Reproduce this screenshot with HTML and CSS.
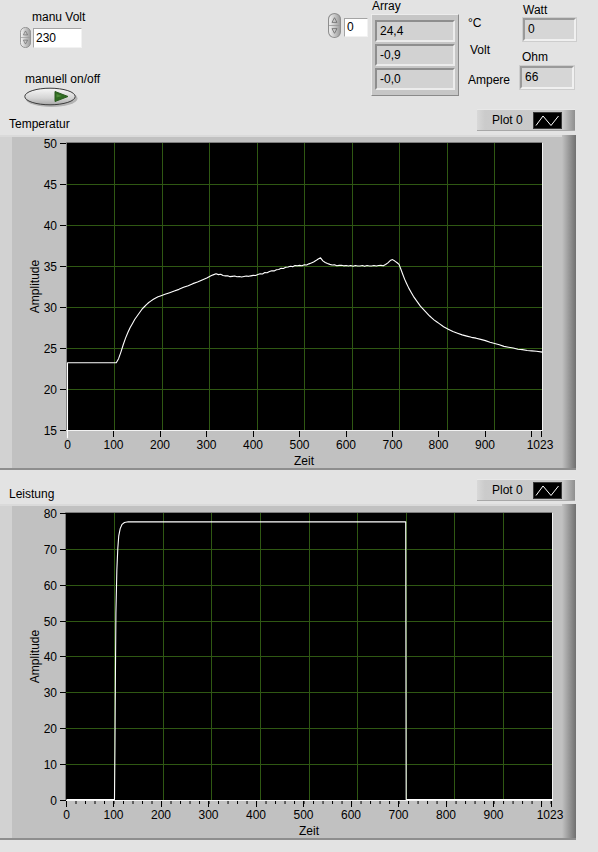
FILE: index.html
```html
<!DOCTYPE html>
<html>
<head>
<meta charset="utf-8">
<title>Front Panel</title>
<link rel="stylesheet" href="styles.css">
</head>
<body>
<div class="panel">
  <div class="controls">
    <div class="col-volt">
      <div class="lbl lbl-manu">manu Volt</div>
      <div class="numrow">
        <svg class="spin spin-s" viewBox="0 0 12 24" preserveAspectRatio="none">
          <defs><linearGradient id="sg1" x1="0" x2="1"><stop offset="0" stop-color="#f6f6f6"/><stop offset="1" stop-color="#9a9a9a"/></linearGradient></defs>
          <rect x="0.5" y="0.5" width="11" height="23" rx="5.5" fill="url(#sg1)" stroke="#8e8e8e"/>
          <line x1="1" y1="12" x2="11" y2="12" stroke="#9a9a9a" stroke-width="0.8"/>
          <path d="M6 4.5 L8.3 9 L3.7 9 Z" fill="none" stroke="#6e6e6e" stroke-width="0.8"/>
          <path d="M6 19.5 L8.3 15 L3.7 15 Z" fill="none" stroke="#6e6e6e" stroke-width="0.8"/>
        </svg>
        <div class="numbox">230</div>
      </div>
      <div class="lbl lbl-onoff">manuell on/off</div>
      <svg class="toggle" width="54" height="21" viewBox="0 0 54 21">
        <defs><linearGradient id="tg" x1="0" y1="0" x2="0" y2="1"><stop offset="0" stop-color="#f7f7f7"/><stop offset="0.6" stop-color="#d4d4d4"/><stop offset="1" stop-color="#a9a9a9"/></linearGradient></defs>
        <ellipse cx="27.5" cy="11.5" rx="26" ry="8.5" fill="#8c8c8c" opacity="0.55"/>
        <ellipse cx="26" cy="9.5" rx="25.2" ry="8.3" fill="url(#tg)" stroke="#3c3c3c" stroke-width="1"/>
        <path d="M31 4.5 L44 9.5 L31 14.5 Z" fill="#2f6a22" stroke="#2a5a1e" stroke-width="1" stroke-linejoin="round"/>
        <path d="M32.5 7 L38 9 L32.5 10.5 Z" fill="#4f8a3a"/>
      </svg>
    </div>

    <div class="col-index">
      <svg class="spin spin-l" viewBox="0 0 12 24" preserveAspectRatio="none">
        <defs><linearGradient id="sg2" x1="0" x2="1"><stop offset="0" stop-color="#f6f6f6"/><stop offset="1" stop-color="#9a9a9a"/></linearGradient></defs>
        <rect x="0.5" y="0.5" width="11" height="23" rx="5.5" fill="url(#sg2)" stroke="#8e8e8e"/>
        <line x1="1" y1="12" x2="11" y2="12" stroke="#9a9a9a" stroke-width="0.8"/>
        <path d="M6 4.5 L8.3 9 L3.7 9 Z" fill="none" stroke="#6e6e6e" stroke-width="0.8"/>
        <path d="M6 19.5 L8.3 15 L3.7 15 Z" fill="none" stroke="#6e6e6e" stroke-width="0.8"/>
      </svg>
      <div class="idxbox">0</div>
    </div>

    <div class="col-array">
      <div class="lbl lbl-array">Array</div>
      <div class="array-frame">
        <div class="cell">24,4</div>
        <div class="cell">-0,9</div>
        <div class="cell">-0,0</div>
      </div>
    </div>

    <div class="col-units">
      <div class="lbl u-c">°C</div>
      <div class="lbl u-volt">Volt</div>
      <div class="lbl u-amp">Ampere</div>
    </div>

    <div class="col-watt">
      <div class="lbl lbl-watt">Watt</div>
      <div class="ind ind-watt">0</div>
      <div class="lbl lbl-ohm">Ohm</div>
      <div class="ind ind-ohm">66</div>
    </div>
  </div>

  <div class="ghead ghead1">
    <div class="lbl glabel">Temperatur</div>
    <div class="legend">
      <span class="lg-text">Plot 0</span>
      <svg class="swatch" width="29" height="17" viewBox="0 0 29 17">
        <rect x="0.5" y="0.5" width="28" height="16" fill="#000" stroke="#3a3a3a"/>
        <polyline points="3,13.5 10,4 18,13.5 25.5,4" fill="none" stroke="#fff" stroke-width="1"/>
      </svg>
    </div>
  </div>

  <div class="graph">
    <svg class="chart" width="598" height="336" viewBox="0 135 598 336">
      <defs><linearGradient id="fr1" x1="0" x2="1"><stop offset="0" stop-color="#c1c1c1"/><stop offset="1" stop-color="#707070"/></linearGradient></defs>
      <rect x="0" y="135" width="576" height="335" fill="#c1c1c1"/>
      <rect x="0" y="135" width="12" height="335" fill="#d2d2d2"/>
      <rect x="0" y="135" width="576" height="2" fill="#dadada"/>
      <rect x="562" y="135" width="14" height="335" fill="url(#fr1)"/>
      <rect x="0" y="468" width="576" height="2" fill="#8e8e8e"/>
      <rect x="67" y="143" width="475" height="287" fill="#000"/>
      <g class="grid">
        <line x1="114.5" y1="143" x2="114.5" y2="430"/>
        <line x1="162.5" y1="143" x2="162.5" y2="430"/>
        <line x1="209.5" y1="143" x2="209.5" y2="430"/>
        <line x1="257.5" y1="143" x2="257.5" y2="430"/>
        <line x1="304.5" y1="143" x2="304.5" y2="430"/>
        <line x1="352.5" y1="143" x2="352.5" y2="430"/>
        <line x1="399.5" y1="143" x2="399.5" y2="430"/>
        <line x1="447.5" y1="143" x2="447.5" y2="430"/>
        <line x1="494.5" y1="143" x2="494.5" y2="430"/>
        <line x1="67" y1="184.5" x2="542" y2="184.5"/>
        <line x1="67" y1="225.5" x2="542" y2="225.5"/>
        <line x1="67" y1="266.5" x2="542" y2="266.5"/>
        <line x1="67" y1="307.5" x2="542" y2="307.5"/>
        <line x1="67" y1="348.5" x2="542" y2="348.5"/>
        <line x1="67" y1="389.5" x2="542" y2="389.5"/>
      </g>
      <path d="M66.5 430 V142.5 H542" stroke="#7e7e7e" fill="none"/>
      <path d="M66.5 430.5 H542.5 V143" stroke="#f2f2f2" fill="none"/>
      <g stroke="#000" stroke-width="1">
        <line x1="60" y1="143.5" x2="66" y2="143.5"/>
        <line x1="60" y1="184.5" x2="66" y2="184.5"/>
        <line x1="60" y1="225.5" x2="66" y2="225.5"/>
        <line x1="60" y1="266.5" x2="66" y2="266.5"/>
        <line x1="60" y1="307.5" x2="66" y2="307.5"/>
        <line x1="60" y1="348.5" x2="66" y2="348.5"/>
        <line x1="60" y1="389.5" x2="66" y2="389.5"/>
        <line x1="60" y1="430.5" x2="66" y2="430.5"/>
        <line x1="67.5" y1="431" x2="67.5" y2="437"/>
        <line x1="113.5" y1="431" x2="113.5" y2="437"/>
        <line x1="160.5" y1="431" x2="160.5" y2="437"/>
        <line x1="206.5" y1="431" x2="206.5" y2="437"/>
        <line x1="253.5" y1="431" x2="253.5" y2="437"/>
        <line x1="299.5" y1="431" x2="299.5" y2="437"/>
        <line x1="346.5" y1="431" x2="346.5" y2="437"/>
        <line x1="392.5" y1="431" x2="392.5" y2="437"/>
        <line x1="438.5" y1="431" x2="438.5" y2="437"/>
        <line x1="485.5" y1="431" x2="485.5" y2="437"/>
        <line x1="531.5" y1="431" x2="531.5" y2="437"/>
        <line x1="541.5" y1="431" x2="541.5" y2="437"/>
      </g>
      <g text-anchor="end">
        <text x="57" y="148">50</text>
        <text x="57" y="189">45</text>
        <text x="57" y="230">40</text>
        <text x="57" y="271">35</text>
        <text x="57" y="312">30</text>
        <text x="57" y="353">25</text>
        <text x="57" y="394">20</text>
        <text x="57" y="435">15</text>
      </g>
      <g text-anchor="middle">
        <text x="67.5" y="449">0</text>
        <text x="113.5" y="449">100</text>
        <text x="160" y="449">200</text>
        <text x="206.5" y="449">300</text>
        <text x="253" y="449">400</text>
        <text x="299.5" y="449">500</text>
        <text x="346" y="449">600</text>
        <text x="392.5" y="449">700</text>
        <text x="438.5" y="449">800</text>
        <text x="485" y="449">900</text>
        <text x="540" y="449">1023</text>
        <text x="304" y="465">Zeit</text>
        <text transform="translate(39,286.5) rotate(-90)">Amplitude</text>
      </g>
      <polyline class="curve" transform="translate(67.5,430) scale(0.46432,-8.2)" vector-effect="non-scaling-stroke" fill="none" stroke="#fff" stroke-width="1.1" stroke-linejoin="round"
        points="0,-1 0,8.2 105,8.2 110,8.7 115,9.5 120,10.4 125,11.2 130,11.9 135,12.5 140,13.0 145,13.5 150,13.9 155,14.3 160,14.7 165,15.0 170,15.3 175,15.55 180,15.75 185,15.95 190,16.1 195,16.25 200,16.35 210,16.55 220,16.75 230,16.95 240,17.15 250,17.4 260,17.6 270,17.85 280,18.05 290,18.3 300,18.55 305,18.7 310,18.85 315,18.95 320,19.05 325,18.95 330,19.0 335,18.85 340,18.8 345,18.82 350,18.7 355,18.74 360,18.78 365,18.68 370,18.72 375,18.66 380,18.72 385,18.78 390,18.74 395,18.8 400,18.86 405,18.84 410,18.96 415,19.05 420,19.02 425,19.2 430,19.18 435,19.32 440,19.42 445,19.4 450,19.55 455,19.58 460,19.72 465,19.7 470,19.84 475,19.88 480,19.96 485,19.92 490,20.06 495,20.02 500,20.08 505,20.04 510,20.16 515,20.12 520,20.26 525,20.36 530,20.48 535,20.66 540,20.86 545,21.0 550,20.62 555,20.42 560,20.3 565,20.2 570,20.12 575,20.16 580,20.04 585,20.08 590,20.1 595,20.02 600,20.06 605,20.0 610,20.06 615,19.96 620,20.06 625,20.0 630,20.0 635,20.06 640,19.96 645,20.06 650,20.0 655,20.0 660,20.06 665,20.0 670,20.06 675,20.08 680,20.02 685,20.18 690,20.38 695,20.66 700,20.78 705,20.6 710,20.4 714,20.2 718,19.6 722,19.0 726,18.4 730,17.9 735,17.3 740,16.8 745,16.3 750,15.9 755,15.5 760,15.1 765,14.8 770,14.5 775,14.2 780,13.9 785,13.65 790,13.4 795,13.2 800,13.0 810,12.6 820,12.3 830,12.0 840,11.8 850,11.6 860,11.45 870,11.3 880,11.2 890,11.05 900,10.9 910,10.7 920,10.55 930,10.4 940,10.2 950,10.1 960,10.0 970,9.85 980,9.8 990,9.7 1000,9.65 1010,9.6 1023,9.5"/>
    </svg>
  </div>

  <div class="ghead ghead2">
    <div class="lbl glabel">Leistung</div>
    <div class="legend">
      <span class="lg-text">Plot 0</span>
      <svg class="swatch" width="29" height="17" viewBox="0 0 29 17">
        <rect x="0.5" y="0.5" width="28" height="16" fill="#000" stroke="#3a3a3a"/>
        <polyline points="3,13.5 10,4 18,13.5 25.5,4" fill="none" stroke="#fff" stroke-width="1"/>
      </svg>
    </div>
  </div>

  <div class="graph">
    <svg class="chart" width="598" height="336" viewBox="0 504 598 336">
      <defs><linearGradient id="fr2" x1="0" x2="1"><stop offset="0" stop-color="#c1c1c1"/><stop offset="1" stop-color="#707070"/></linearGradient></defs>
      <rect x="0" y="504" width="576" height="336" fill="#c1c1c1"/>
      <rect x="0" y="504" width="12" height="336" fill="#d2d2d2"/>
      <rect x="0" y="504" width="576" height="2" fill="#dadada"/>
      <rect x="562" y="504" width="14" height="336" fill="url(#fr2)"/>
      <rect x="0" y="838" width="576" height="2" fill="#8e8e8e"/>
      <rect x="66" y="513" width="486" height="287" fill="#000"/>
      <g class="grid">
        <line x1="114.5" y1="513" x2="114.5" y2="800"/>
        <line x1="163.5" y1="513" x2="163.5" y2="800"/>
        <line x1="211.5" y1="513" x2="211.5" y2="800"/>
        <line x1="260.5" y1="513" x2="260.5" y2="800"/>
        <line x1="309.5" y1="513" x2="309.5" y2="800"/>
        <line x1="357.5" y1="513" x2="357.5" y2="800"/>
        <line x1="406.5" y1="513" x2="406.5" y2="800"/>
        <line x1="454.5" y1="513" x2="454.5" y2="800"/>
        <line x1="503.5" y1="513" x2="503.5" y2="800"/>
        <line x1="66" y1="549.5" x2="552" y2="549.5"/>
        <line x1="66" y1="585.5" x2="552" y2="585.5"/>
        <line x1="66" y1="621.5" x2="552" y2="621.5"/>
        <line x1="66" y1="656.5" x2="552" y2="656.5"/>
        <line x1="66" y1="692.5" x2="552" y2="692.5"/>
        <line x1="66" y1="728.5" x2="552" y2="728.5"/>
        <line x1="66" y1="764.5" x2="552" y2="764.5"/>
      </g>
      <path d="M65.5 800 V512.5 H552" stroke="#7e7e7e" fill="none"/>
      <path d="M65.5 800.5 H552.5 V513" stroke="#f2f2f2" fill="none"/>
      <g stroke="#000" stroke-width="1">
        <line x1="60" y1="513.5" x2="66" y2="513.5"/>
        <line x1="60" y1="549.5" x2="66" y2="549.5"/>
        <line x1="60" y1="585.5" x2="66" y2="585.5"/>
        <line x1="60" y1="621.5" x2="66" y2="621.5"/>
        <line x1="60" y1="656.5" x2="66" y2="656.5"/>
        <line x1="60" y1="692.5" x2="66" y2="692.5"/>
        <line x1="60" y1="728.5" x2="66" y2="728.5"/>
        <line x1="60" y1="764.5" x2="66" y2="764.5"/>
        <line x1="60" y1="800.5" x2="66" y2="800.5"/>
        <line x1="66.5" y1="801" x2="66.5" y2="807"/>
        <line x1="113.5" y1="801" x2="113.5" y2="807"/>
        <line x1="161.5" y1="801" x2="161.5" y2="807"/>
        <line x1="208.5" y1="801" x2="208.5" y2="807"/>
        <line x1="256.5" y1="801" x2="256.5" y2="807"/>
        <line x1="303.5" y1="801" x2="303.5" y2="807"/>
        <line x1="351.5" y1="801" x2="351.5" y2="807"/>
        <line x1="398.5" y1="801" x2="398.5" y2="807"/>
        <line x1="446.5" y1="801" x2="446.5" y2="807"/>
        <line x1="493.5" y1="801" x2="493.5" y2="807"/>
        <line x1="541.5" y1="801" x2="541.5" y2="807"/>
        <line x1="551.5" y1="801" x2="551.5" y2="807"/>
      </g>
      <line x1="66" y1="802.5" x2="553" y2="802.5" stroke="#000" stroke-width="3" stroke-dasharray="1 8.5014"/>
      <g text-anchor="end">
        <text x="57" y="518">80</text>
        <text x="57" y="554">70</text>
        <text x="57" y="590">60</text>
        <text x="57" y="626">50</text>
        <text x="57" y="661">40</text>
        <text x="57" y="697">30</text>
        <text x="57" y="733">20</text>
        <text x="57" y="769">10</text>
        <text x="57" y="805">0</text>
      </g>
      <g text-anchor="middle">
        <text x="66.5" y="819">0</text>
        <text x="113.5" y="819">100</text>
        <text x="161" y="819">200</text>
        <text x="208.5" y="819">300</text>
        <text x="256" y="819">400</text>
        <text x="303.5" y="819">500</text>
        <text x="351" y="819">600</text>
        <text x="398.5" y="819">700</text>
        <text x="446" y="819">800</text>
        <text x="493.5" y="819">900</text>
        <text x="550" y="819">1023</text>
        <text x="309" y="835">Zeit</text>
        <text transform="translate(39,656.5) rotate(-90)">Amplitude</text>
      </g>
      <polyline class="curve" transform="translate(66.5,799.5) scale(0.47507,-3.5875)" vector-effect="non-scaling-stroke" fill="none" stroke="#fff" stroke-width="1.1" stroke-linejoin="round"
        points="0,0 101,0 102,15 103,35 104,52 106,64 108,70 110,73.5 113,75.5 117,76.7 122,77.2 130,77.4 714,77.4 715,0 1023,0"/>
    </svg>
  </div>
</div>
</body>
</html>
```

FILE: styles.css
```css
* {
  box-sizing: border-box;
}

body {
  margin: 0;
  background: #e3e3e3;
  font-family: "Liberation Sans", Arial, sans-serif;
  font-size: 12px;
  color: #000;
}

.panel {
  width: 598px;
  height: 852px;
  overflow: hidden;
}

.lbl {
  line-height: 14px;
  white-space: nowrap;
}

/* ---------- top controls ---------- */
.controls {
  display: flex;
  align-items: flex-start;
  height: 108px;
}

.col-volt {
  margin-left: 20px;
  width: 62px;
  display: flex;
  flex-direction: column;
  align-items: flex-start;
}

.lbl-manu {
  margin: 10px 0 0 12px;
}

.numrow {
  display: flex;
  align-items: center;
  margin-top: 3px;
}

.spin {
  display: block;
  flex: none;
}

.spin-s {
  width: 11px;
  height: 21px;
}

.spin-l {
  width: 13px;
  height: 25px;
  margin-top: 13px;
}

.numbox {
  width: 49px;
  height: 20px;
  margin-left: 2px;
  background: #fff;
  border-top: 1px solid #a4a4a4;
  border-left: 1px solid #a4a4a4;
  border-right: 1px solid #f2f2f2;
  border-bottom: 1px solid #f2f2f2;
  padding-left: 2px;
  line-height: 18px;
}

.lbl-onoff {
  margin: 24px 0 0 5px;
}

.toggle {
  display: block;
  margin: 1px 0 0 4px;
}

.col-index {
  display: flex;
  align-items: flex-start;
  margin-left: 246px;
}

.idxbox {
  width: 24px;
  height: 19px;
  margin: 18px 0 0 3px;
  background: #fff;
  border-top: 1px solid #a4a4a4;
  border-left: 1px solid #a4a4a4;
  border-right: 1px solid #f2f2f2;
  border-bottom: 1px solid #f2f2f2;
  padding-left: 2px;
  line-height: 17px;
}

.col-array {
  margin-left: 3px;
}

.lbl-array {
  line-height: 13px;
  margin-left: 1px;
}

.array-frame {
  width: 88px;
  height: 82px;
  margin-top: 1px;
  padding: 5px 3px;
  background: #c6c6c6;
  border: 1px solid;
  border-color: #ececec #8a8a8a #8a8a8a #ececec;
  display: flex;
  flex-direction: column;
  gap: 2px;
}

.cell {
  width: 80px;
  height: 22px;
  background: #d2d2d2;
  border: 2px solid;
  border-color: #8e8e8e #ececec #ececec #8e8e8e;
  padding-left: 3px;
  line-height: 18px;
}

.col-units {
  width: 52px;
  margin-left: 9px;
}

.u-c {
  margin-top: 16px;
}

.u-volt {
  margin: 13px 0 0 2px;
}

.u-amp {
  margin-top: 16px;
}

.col-watt {
  width: 58px;
}

.lbl-watt {
  margin: 3px 0 0 3px;
}

.ind {
  height: 23px;
  background: #d6d6d6;
  border: 2px solid;
  border-color: #9a9a9a #f0f0f0 #f0f0f0 #9a9a9a;
  box-shadow: 0 0 0 1px #cdcdcd;
  padding-left: 3px;
  line-height: 19px;
}

.ind-watt {
  width: 53px;
  margin: 1px 0 0 3px;
}

.lbl-ohm {
  margin: 9px 0 0 2px;
}

.ind-ohm {
  width: 54px;
  margin-top: 2px;
}

/* ---------- graph headers ---------- */
.ghead {
  display: flex;
  justify-content: space-between;
  align-items: flex-start;
}

.ghead1 {
  height: 27px;
}

.ghead1 .glabel {
  margin: 9px 0 0 9px;
}

.ghead1 .legend {
  margin: 1px 23px 0 0;
}

.ghead2 {
  height: 33px;
}

.ghead2 .glabel {
  margin: 16px 0 0 9px;
}

.ghead2 .legend {
  margin: 8px 23px 0 0;
}

.legend {
  width: 98px;
  height: 22px;
  display: flex;
  align-items: center;
  padding-left: 15px;
  background: linear-gradient(to right, #d8d8d8 0, #cbcbcb 8%, #c8c8c8 88%, #8e8e8e 100%);
  border-top: 1px solid #e8e8e8;
  border-bottom: 1px solid #a8a8a8;
}

.lg-text {
  line-height: 14px;
}

.swatch {
  display: block;
  margin-left: 10px;
}

/* ---------- graphs ---------- */
.graph {
  height: 336px;
}

.chart {
  display: block;
}

.chart text {
  font-family: "Liberation Sans", Arial, sans-serif;
  font-size: 12px;
  fill: #000;
}

.grid line {
  stroke: #2f5813;
  stroke-width: 1;
}
```
